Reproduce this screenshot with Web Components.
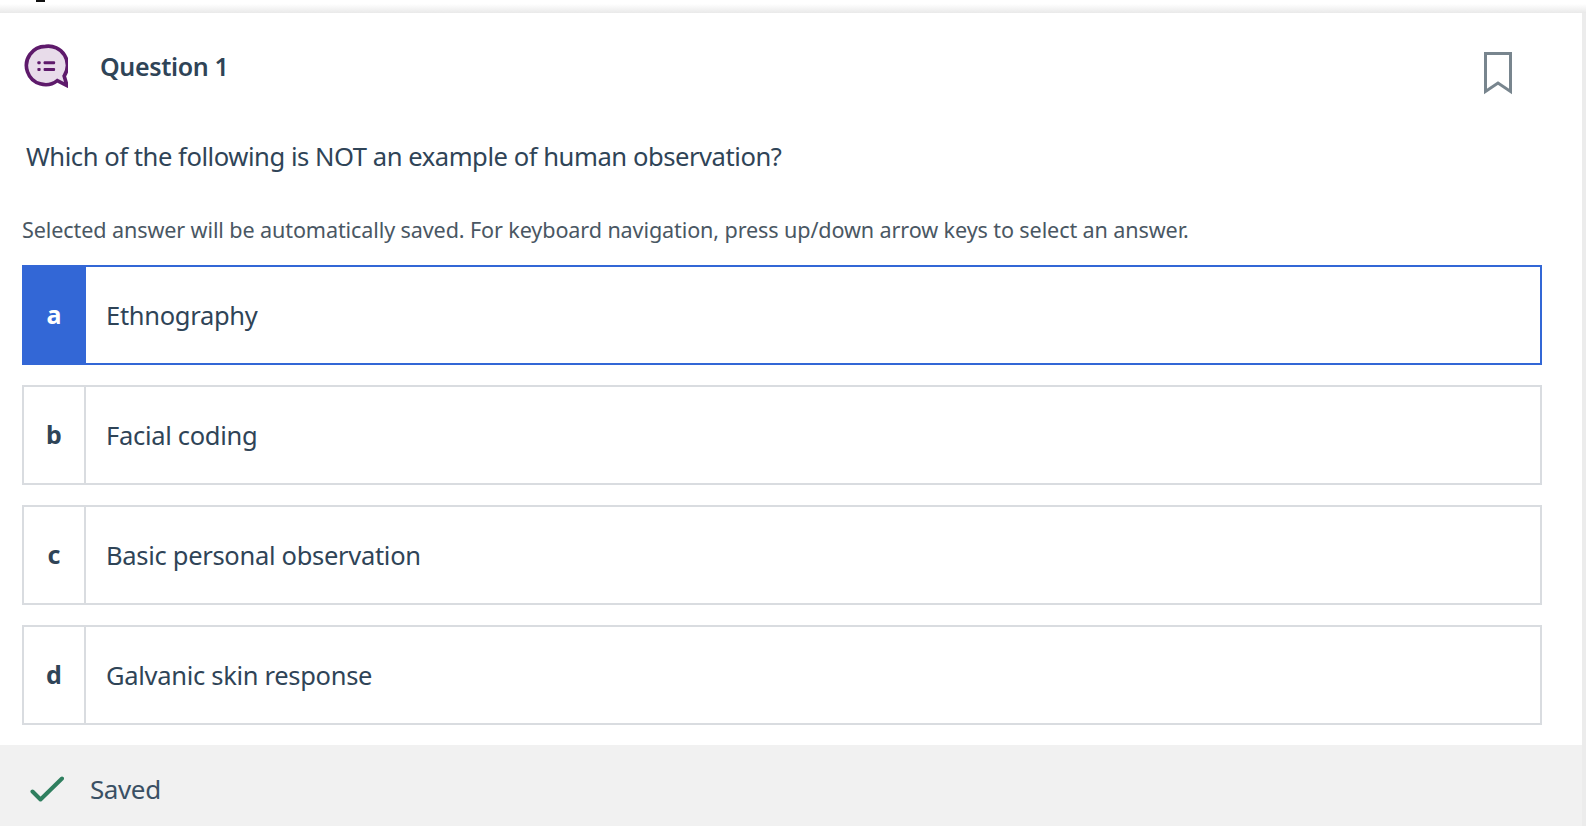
<!DOCTYPE html>
<html>
<head>
<meta charset="utf-8">
<title>Question</title>
<style>
  html, body { margin: 0; padding: 0; height: 826px; overflow: hidden; background: #fff; }
  body { font-family: "Noto Sans", "Open Sans", sans-serif; color: #2f4457; }
</style>
</head>
<body>
<quiz-card>
  <question-header slot="header">Question 1</question-header>
  <span slot="prompt">Which of the following is NOT an example of human observation?</span>
  <span slot="hint">Selected answer will be automatically saved. For keyboard navigation, press up/down arrow keys to select an answer.</span>
  <answer-option letter="a" selected>Ethnography</answer-option>
  <answer-option letter="b">Facial coding</answer-option>
  <answer-option letter="c">Basic personal observation</answer-option>
  <answer-option letter="d">Galvanic skin response</answer-option>
  <save-status slot="footer">Saved</save-status>
</quiz-card>

<script>
class QuizCard extends HTMLElement {
  constructor() {
    super();
    this.shadowDOM = this.attachShadow({mode: 'open'});
    this.shadowDOM.innerHTML = `
      <style>
        * { box-sizing: border-box; margin: 0; padding: 0; }
        :host {
          display: block;
          height: 826px;
          padding-top: 13px;
          padding-right: 4px;
          position: relative;
          background: linear-gradient(to bottom, #fff 0, #fff 4px, #e9e9e9 13px) top left / 100% 13px no-repeat, #ececec;
        }
        .peek {
          position: absolute;
          left: 36px;
          top: 0;
          width: 9px;
          height: 2px;
          background: #111;
        }
        .card {
          background: #fff;
          height: 813px;
          display: flex;
          flex-direction: column;
        }
        .body { padding: 0 40px 0 22px; flex: 1; }
        .prompt {
          font-size: 25.6px;
          letter-spacing: -0.46px;
          line-height: 36px;
          padding: 0 0 0 4px;
          margin-top: 16px;
        }
        .hint {
          font-size: 21.6px;
          letter-spacing: -0.12px;
          line-height: 30px;
          color: #4a5763;
          margin-top: 40px;
        }
        .options {
          display: flex;
          flex-direction: column;
          gap: 20px;
          margin-top: 20px;
        }
      </style>
      <div class="peek"></div>
      <div class="card">
        <slot name="header"></slot>
        <div class="body">
          <p class="prompt"><slot name="prompt"></slot></p>
          <p class="hint"><slot name="hint"></slot></p>
          <div class="options"><slot></slot></div>
        </div>
        <slot name="footer"></slot>
      </div>
    `;
  }
}

class QuestionHeader extends HTMLElement {
  constructor() {
    super();
    this.shadowDOM = this.attachShadow({mode: 'open'});
    this.shadowDOM.innerHTML = `
      <style>
        :host {
          display: flex;
          height: 110px;
          padding: 0 69px 0 24px;
          box-sizing: border-box;
        }
        .icon { width: 44px; height: 44px; margin-top: 31px; flex: none; }
        .title {
          font-size: 25px;
          font-weight: 600;
          letter-spacing: -0.34px;
          line-height: 36px;
          margin: 35px 0 0 32px;
          flex: 1;
        }
        .mark { width: 30px; height: 44px; margin-top: 38px; flex: none; }
      </style>
      <svg class="icon" viewBox="0 0 46 46">
        <path d="M22.500 2.500a20 20 0 1 0 12.300 35.800L45 43.500l-3-10A20 20 0 0 0 22.500 2.500z" fill="#e8dcea" stroke="#5e1a6b" stroke-width="3.800" stroke-linejoin="miter"/>
        <g fill="#5e1a6b">
          <rect x="14" y="18" width="3.400" height="3.200" rx="1"/>
          <rect x="14" y="25" width="3.400" height="3.200" rx="1"/>
          <rect x="20.500" y="18" width="12" height="3.200" rx="1"/>
          <rect x="20.500" y="25" width="12" height="3.200" rx="1"/>
        </g>
      </svg>
      <div class="title"><slot></slot></div>
      <svg class="mark" viewBox="0 0 30 44">
        <path d="M2.500 2.500h25v38L15 32 2.500 40.500z" fill="none" stroke="#78858e" stroke-width="3"/>
      </svg>
    `;
  }
}

class AnswerOption extends HTMLElement {
  constructor() {
    super();
    this.shadowDOM = this.attachShadow({mode: 'open'});
    this.shadowDOM.innerHTML = `
      <style>
        :host {
          display: flex;
          height: 100px;
          box-sizing: border-box;
          border: 2px solid #d9dce0;
          background: #fff;
        }
        :host([selected]) { border-color: #3367d6; }
        .letter {
          width: 60px;
          flex: none;
          display: flex;
          align-items: center;
          justify-content: center;
          border-right: 2px solid #d9dce0;
          font-size: 25px;
          font-weight: 700;
          padding-bottom: 2px;
          box-sizing: content-box;
          height: 94px;
        }
        :host([selected]) .letter {
          background: #3367d6;
          border-right-color: #3367d6;
          color: #fff;
        }
        .text {
          font-size: 25.500px;
          letter-spacing: -0.3px;
          line-height: 96px;
          padding-left: 20px;
        }
      </style>
      <div class="letter"></div>
      <div class="text"><slot></slot></div>
    `;
  }
  connectedCallback() {
    this.shadowDOM.querySelector('.letter').textContent = this.getAttribute('letter');
  }
}

class SaveStatus extends HTMLElement {
  constructor() {
    super();
    this.shadowDOM = this.attachShadow({mode: 'open'});
    this.shadowDOM.innerHTML = `
      <style>
        :host {
          display: flex;
          align-items: center;
          height: 81px;
          flex: none;
          background: #f1f1f1;
          padding: 6px 0 0 30px;
          box-sizing: border-box;
          color: #3a5064;
        }
        svg { width: 34px; height: 26px; flex: none; }
        .text {
          font-size: 26px;
          letter-spacing: -0.4px;
          margin-left: 26px;
        }
      </style>
      <svg viewBox="0 0 34 26">
        <path d="M2.500 15.500 10.500 23.500 32 2.500" fill="none" stroke="#2f7f5f" stroke-width="4" stroke-linecap="round" stroke-linejoin="round"/>
      </svg>
      <div class="text"><slot></slot></div>
    `;
  }
}

customElements.define('quiz-card', QuizCard);
customElements.define('question-header', QuestionHeader);
customElements.define('answer-option', AnswerOption);
customElements.define('save-status', SaveStatus);
</script>
</body>
</html>
